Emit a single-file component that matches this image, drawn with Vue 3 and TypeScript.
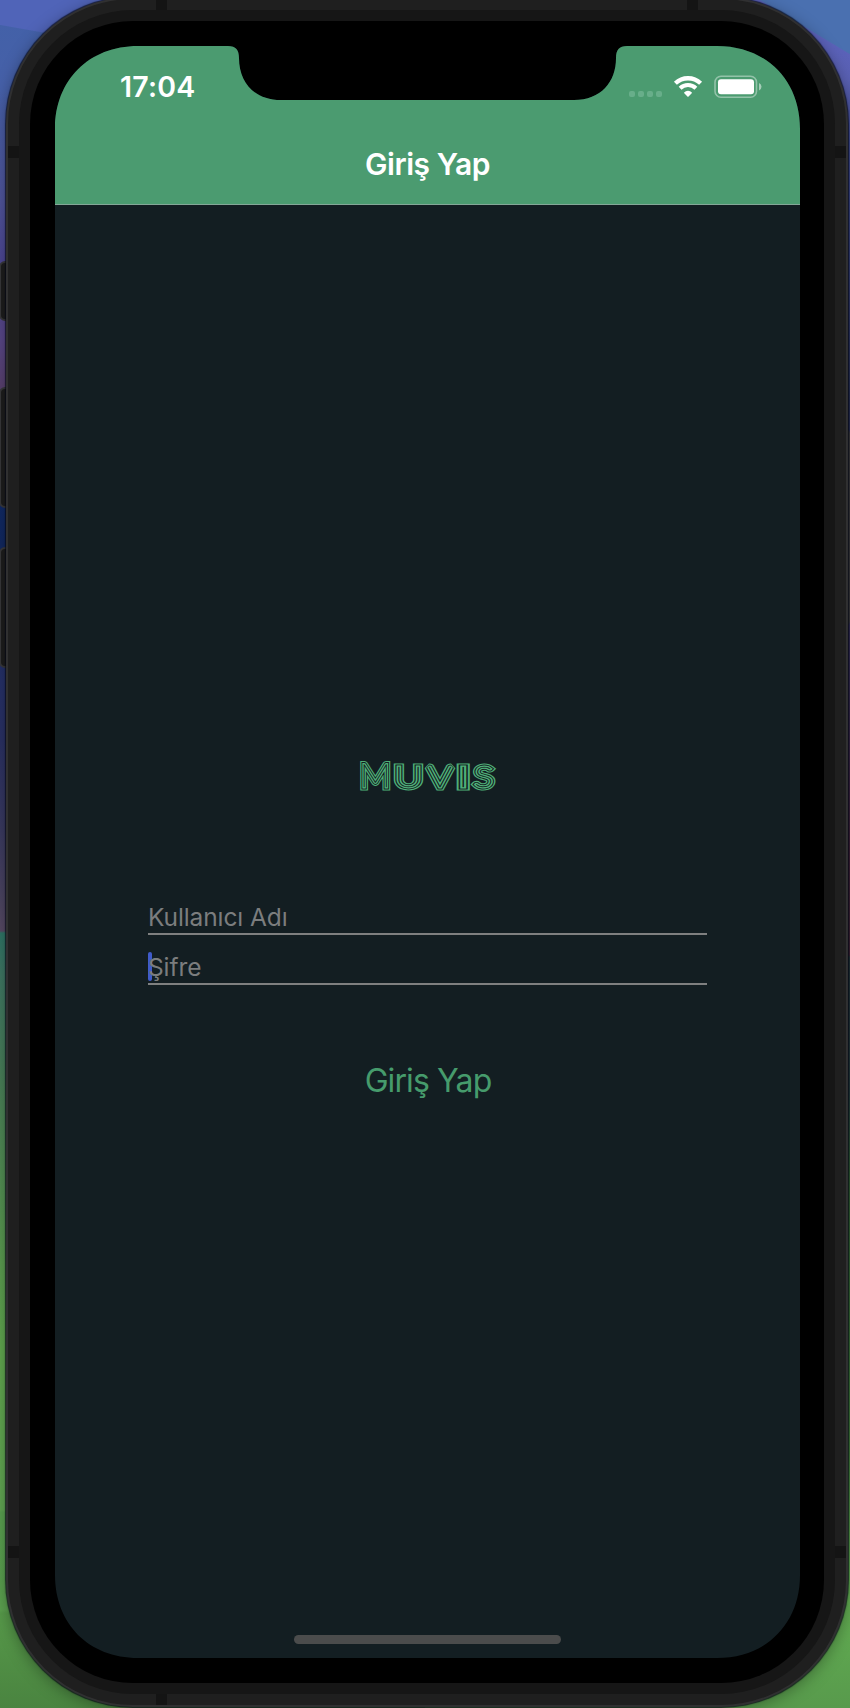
<script setup lang="ts">
interface LogoLetter {
  char: string
  x: number
  y: number
  size: number
  width: number
}

interface LogoLayer {
  width: number
  tone: string
}

const letters: LogoLetter[] = [
  { char: 'M', x: 2, y: 27.5, size: 32.5, width: 30.5 },
  { char: 'u', x: 36.5, y: 28.3, size: 28, width: 28 },
  { char: 'v', x: 70.2, y: 27.5, size: 27.5, width: 23.5 },
  { char: 'i', x: 99.3, y: 27.5, size: 27.5, width: 12 },
  { char: 's', x: 116.2, y: 28.2, size: 28, width: 19 },
]

const layers: LogoLayer[] = [
  { width: 4.8, tone: 'paper' },
  { width: 3, tone: 'ink' },
  { width: 0.4, tone: 'paper' },
]

const bands: string[] = ['top-left', 'top-right', 'left-high', 'left-low', 'right-high', 'right-low', 'bottom-left']
</script>

<template>
  <div class="desktop">
    <div class="wallpaper left"></div>
    <div class="wallpaper right"></div>
    <span class="side-key mute"></span>
    <span class="side-key volume-up"></span>
    <span class="side-key volume-down"></span>
    <span class="side-key power"></span>

    <div class="device">
      <span v-for="band in bands" :key="band" class="band" :class="band"></span>
      <div class="frame">
        <div class="bezel">
          <main class="screen">
            <header class="header">
              <div class="status">
                <span class="time">17:04</span>
                <div class="indicators">
                  <div class="signal"><i></i><i></i><i></i><i></i></div>
                  <svg class="wifi" width="30" height="24" viewBox="0 0 30 24">
                    <path d="M2.4 8.3 A18.2 18.2 0 0 1 27.6 8.3" fill="none" stroke="#fff" stroke-width="4.3" />
                    <path d="M7.1 13.3 A11.4 11.4 0 0 1 22.9 13.3" fill="none" stroke="#fff" stroke-width="4" />
                    <path d="M10.8 17.7 Q15 14 19.2 17.7 L15.6 21.6 Q15 22.1 14.4 21.6 Z" fill="#fff" />
                  </svg>
                  <svg class="battery" width="49" height="24" viewBox="0 0 49 24">
                    <rect x="1" y="1.3" width="41.5" height="21" rx="6" fill="none" stroke="#fff" stroke-opacity=".4" stroke-width="1.6" />
                    <rect x="4" y="4.3" width="36" height="15" rx="3" fill="#fff" />
                    <path d="M45 8 Q47.5 9.2 47.5 11.8 Q47.5 14.4 45 15.6 Z" fill="#fff" fill-opacity=".5" />
                  </svg>
                </div>
              </div>
              <h1 class="title">Giriş Yap</h1>
            </header>

            <section class="content">
              <svg class="logo" width="140" height="38" viewBox="0 0 140 38" role="img" aria-label="Muvis">
                <g class="ink" stroke-width="7">
                  <text id="wordmark" class="wordmark">
                    <tspan
                      v-for="letter in letters"
                      :key="letter.char"
                      :x="letter.x"
                      :y="letter.y"
                      :font-size="letter.size"
                      :textLength="letter.width"
                      lengthAdjust="spacingAndGlyphs"
                    >{{ letter.char }}</tspan>
                  </text>
                </g>
                <use v-for="layer in layers" :key="layer.width" href="#wordmark" :class="layer.tone" :stroke-width="layer.width" />
              </svg>

              <form class="form" @submit.prevent>
                <label class="field"><input type="text" placeholder="Kullanıcı Adı" /></label>
                <label class="field active"><input type="password" placeholder="Şifre" /></label>
                <button class="submit" type="submit">Giriş Yap</button>
              </form>
            </section>
            <div class="home"></div>
          </main>
        </div>
      </div>
    </div>
  </div>
</template>

<style>
body {
  background: #1f1f1f;
}
</style>

<style scoped>
.desktop {
  position: relative;
  width: 850px;
  height: 1708px;
  overflow: hidden;
  font-family: Inter, "Liberation Sans", sans-serif;
}
.desktop * {
  box-sizing: border-box;
}
.wallpaper {
  position: absolute;
  top: 0;
  width: 425px;
  height: 1708px;
}
.wallpaper.left {
  left: 0;
  background:
    linear-gradient(10deg, transparent 1657px, #5064b8 1658px),
    linear-gradient(#4261a8 0, #4660a8 90px, #50559c 200px, #4d4794 260px, #594788 340px, #59416f 386px, #102a66 500px, #12285f 545px, #263169 680px, #2a3164 740px, #3a3a60 830px, #4e4662 905px, #584a65 931px, #2f7566 933px, #3f7763 975px, #4a8058 1083px, #5b9c50 1261px, #61a84f 1350px, #61a653 1510px, #5aa150 1512px, #5ba04f 1610px, #569849 1613px, #4a8440 1708px);
}
.wallpaper.right {
  right: 0;
  background:
    linear-gradient(31deg, transparent 1636px, #4a70b0 1637px),
    linear-gradient(#5b62b9 0, #5b62b9 48px, #5a61b4 80px, #3f4b90 140px, #252d4f 400px, #302b50 650px, #3b1f35 850px, #3a2233 955px, #1f3035 957px, #22383a 1090px, #2e5a30 1180px, #3f7838 1450px, #62ad52 1600px, #589a4c 1708px);
}
.side-key {
  position: absolute;
  left: -1px;
  width: 14px;
  background: #1d1d1d;
  border: 2px solid #38383a;
  border-radius: 6px;
}
.mute { top: 261px; height: 60px; }
.volume-up { top: 387px; height: 121px; }
.volume-down { top: 547px; height: 121px; }
.power { left: 836px; top: 428px; height: 199px; }
.device {
  position: absolute;
  left: 6px;
  top: -3px;
  width: 842px;
  height: 1710px;
  padding: 11px;
  border: 2px solid #303031;
  border-radius: 127px;
  background: #1f1f1f;
  box-shadow: 0 0 1px 1px rgba(4, 7, 20, 0.7), 0 3px 16px rgba(0, 0, 0, 0.35);
}
.band {
  position: absolute;
  width: 11px;
  height: 12px;
  background: #141414;
}
.top-left { left: 148px; top: 0; }
.top-right { left: 679px; top: 0; }
.left-high { left: 0; top: 147px; }
.left-low { left: 0; top: 1547px; }
.right-high { right: 0; top: 147px; }
.right-low { right: 0; top: 1547px; }
.bottom-left { left: 148px; bottom: 0; }
.frame {
  position: relative;
  height: 1684px;
  padding: 11px;
  border-radius: 114px;
  background: #161616;
}
.bezel {
  height: 1662px;
  padding: 25px 24px 25px 25px;
  border-radius: 103px;
  background: #000;
}
.screen {
  display: flex;
  flex-direction: column;
  width: 745px;
  height: 1612px;
  background: #131e22;
  clip-path: path("M0 83 C0 34 34 0 83 0 H173 C181 0 184 4 184 12 C184 36 199 54 226 54 H519 C546 54 561 36 561 12 C561 4 564 0 572 0 H662 C711 0 745 34 745 83 V1529 C745 1578 711 1612 662 1612 H83 C34 1612 0 1578 0 1529 Z");
}
.header {
  height: 159px;
  background: #4b9b70;
  border-bottom: 1px solid #84a898;
  color: #fff;
}
.status {
  display: flex;
  justify-content: space-between;
  height: 79px;
  padding: 24px 37px 0 65px;
}
.time {
  font-size: 28.5px;
  font-weight: 600;
  line-height: 34px;
  letter-spacing: 0.2px;
}
.indicators {
  display: flex;
  align-items: flex-start;
  padding-top: 5px;
}
.signal {
  display: flex;
  gap: 3px;
  margin: 16px 11px 0 0;
}
.signal i {
  width: 6px;
  height: 6px;
  border-radius: 2px;
  background: #68ae8a;
}
.wifi {
  margin-right: 11px;
}
.title {
  margin: 0;
  text-align: center;
  font-size: 30px;
  font-weight: 600;
  line-height: 79px;
  letter-spacing: -0.45px;
}
.content {
  display: flex;
  flex: 1;
  flex-direction: column;
  align-items: center;
}
.logo {
  margin-top: 554px;
  overflow: visible;
}
.wordmark {
  font-family: Lato, sans-serif;
  font-weight: 100;
  text-transform: uppercase;
  stroke-linejoin: miter;
  stroke-miterlimit: 1.6;
}
.ink {
  fill: #4fae78;
  stroke: #4fae78;
}
.paper {
  fill: #131e22;
  stroke: #131e22;
}
.form {
  display: flex;
  flex-direction: column;
  align-items: center;
  width: 559px;
  margin-top: 102px;
}
.field {
  position: relative;
  display: block;
  width: 100%;
  height: 36px;
  margin-bottom: 14px;
  border-bottom: 2px solid #7f8080;
}
.field input {
  position: relative;
  display: block;
  width: 100%;
  height: 34px;
  padding: 2px 0 0;
  border: 0;
  outline: 0;
  background: transparent;
  color: #fff;
  font-family: inherit;
  font-size: 24.5px;
  letter-spacing: -0.1px;
}
.field input::placeholder {
  color: #7b7d7e;
  opacity: 1;
}
.field.active::before {
  content: "";
  position: absolute;
  left: 0;
  top: 3px;
  width: 4px;
  height: 29px;
  border-radius: 2px;
  background: #405bc9;
}
.submit {
  margin: 46px 0 0 1px;
  padding: 0;
  border: 0;
  background: none;
  color: #469b6c;
  font-family: inherit;
  font-size: 32px;
  line-height: 72px;
  letter-spacing: -0.9px;
}
.home {
  align-self: center;
  width: 267px;
  height: 9px;
  margin-bottom: 14px;
  border-radius: 5px;
  background: #4b4c4c;
}
</style>
